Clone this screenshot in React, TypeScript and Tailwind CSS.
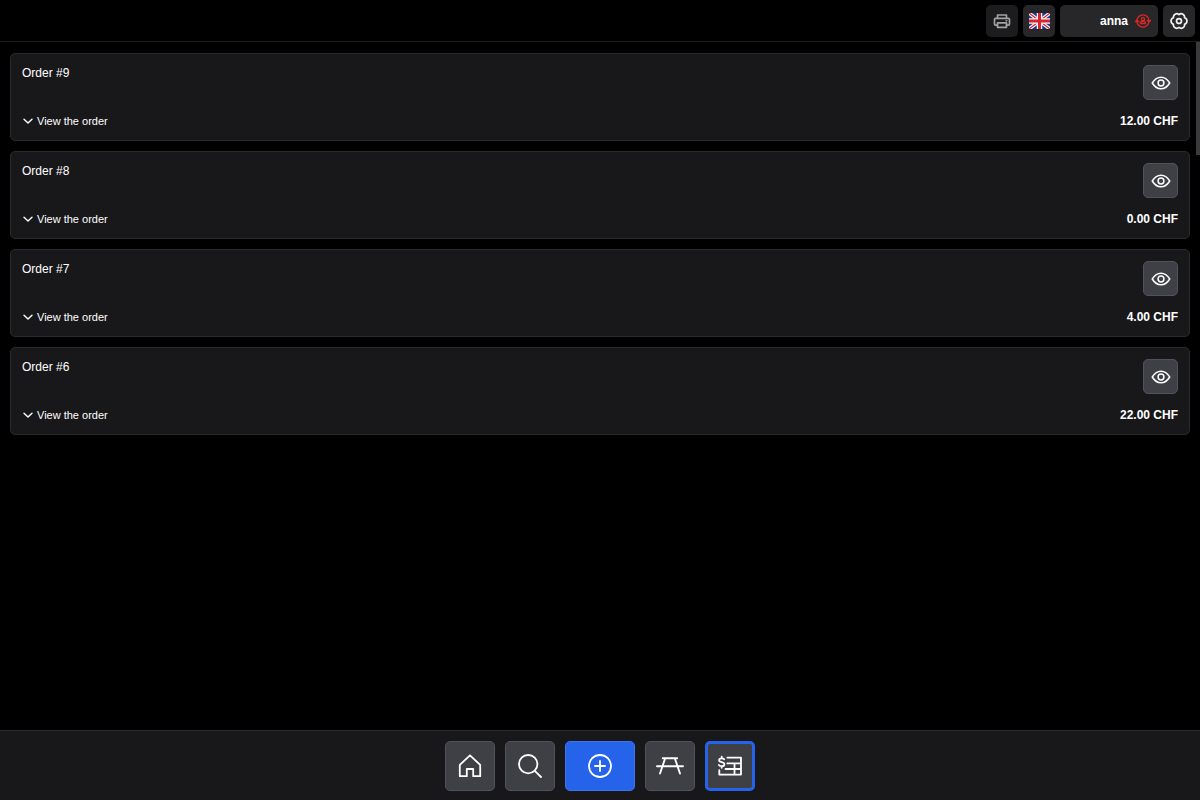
import type { ReactNode } from "react";

const orders = [
  { id: 9, total: "12.00" },
  { id: 8, total: "0.00" },
  { id: 7, total: "4.00" },
  { id: 6, total: "22.00" },
];

function Icon({ className, width = 1.8, children }: { className: string; width?: number; children: ReactNode }) {
  return (
    <svg
      className={className}
      viewBox="0 0 24 24"
      fill="none"
      stroke="currentColor"
      strokeWidth={width}
      strokeLinecap="round"
      strokeLinejoin="round"
      aria-hidden="true"
    >
      {children}
    </svg>
  );
}

function PrinterIcon() {
  return (
    <Icon className="size-[18px] text-[#a3a3a6]" width={2.2}>
      <path d="M6 8.500V4h12v4.500M6 17.500H3.500a1.500 1.500 0 0 1-1.500-1.500v-6A1.500 1.500 0 0 1 3.500 8.500h17A1.500 1.500 0 0 1 22 10v6a1.500 1.500 0 0 1-1.500 1.500H18" />
      <path d="M6 14.500h12v6H6zM17.500 11.700h.8" />
    </Icon>
  );
}

function FlagIcon() {
  return (
    <svg className="h-4 w-[21px]" viewBox="0 0 42 32" aria-hidden="true">
      <path fill="#1b3a93" d="M0 0h42v32H0z" />
      <path stroke="#f4f4f6" strokeWidth="7" d="m0 0 42 32M42 0 0 32" />
      <path stroke="#d8232f" strokeWidth="2.500" d="m0 0 42 32M42 0 0 32" />
      <path stroke="#f4f4f6" strokeWidth="11" d="M21 0v32M0 16h42" />
      <path stroke="#d8232f" strokeWidth="6" d="M21 0v32M0 16h42" />
    </svg>
  );
}

function SwitchUserIcon() {
  return (
    <Icon className="size-4 text-[#dc2626]" width={2}>
      <path d="M3 13.500V12A9.200 9.200 0 0 1 18.500 5.500M21 10.500V12A9.200 9.200 0 0 1 5.500 18.500" />
      <path d="M18.500 5.500A9.200 9.200 0 0 1 21 12M5.500 18.500A9.200 9.200 0 0 1 3 12" />
      <path d="m18.300 11 2.700 2.700 2.500-2.700M.7 13l2.300-2.700L5.700 13" />
      <circle cx="12" cy="9.300" r="2.300" />
      <path d="M8.300 16v-.8a2.500 2.500 0 0 1 2.500-2.500h2.400a2.500 2.500 0 0 1 2.500 2.500v.8z" />
    </Icon>
  );
}

function SettingsIcon() {
  return (
    <Icon className="size-[18px] text-[#f0f0f0]" width={2.3}>
      <path d="M12 3.500A4.500 4.500 0 0 1 19.400 7.700A4.500 4.500 0 0 1 19.400 16.300A4.500 4.500 0 0 1 12 20.500A4.500 4.500 0 0 1 4.600 16.300A4.500 4.500 0 0 1 4.600 7.700A4.500 4.500 0 0 1 12 3.500z" />
      <circle cx="12" cy="12" r="3.300" />
    </Icon>
  );
}

function EyeIcon() {
  return (
    <Icon className="size-5" width={1.8}>
      <path d="M1.500 12C4.200 7.700 7.800 5 12 5s7.800 2.700 10.500 7C19.800 16.300 16.200 19 12 19S4.200 16.300 1.500 12z" />
      <circle cx="12" cy="12" r="3.500" />
    </Icon>
  );
}

function ChevronIcon() {
  return (
    <Icon className="size-3" width={2.8}>
      <path d="m4 8.500 8 7.500 8-7.500" />
    </Icon>
  );
}

function HomeIcon() {
  return (
    <Icon className="size-6">
      <path d="M1.800 10.900 12 1.300l10.200 9.600v11.300h-7V15H8.800v7.200h-7z" />
    </Icon>
  );
}

function SearchIcon() {
  return (
    <Icon className="size-6">
      <circle cx="10.200" cy="10.200" r="9.200" />
      <path d="m16.800 16.800 6.200 6.200" />
    </Icon>
  );
}

function AddIcon() {
  return (
    <Icon className="size-6">
      <circle cx="12" cy="12" r="11" />
      <path d="M12 7v10M7 12h10" />
    </Icon>
  );
}

function TableIcon() {
  return (
    <svg
      className="h-6 w-7"
      viewBox="0 0 28 24"
      fill="none"
      stroke="currentColor"
      strokeWidth="1.900"
      strokeLinecap="round"
      aria-hidden="true"
    >
      <path d="M6.800 4.200h14.400M1 12.300h26M9.200 4.200 4 19.500M18.800 4.200 24 19.500" />
    </svg>
  );
}

function BillIcon() {
  return (
    <Icon className="size-6" width={1.8}>
      <path d="M6.200 5.300C5.700 4.600 4.800 4.300 3.700 4.300 2.200 4.300 1.100 5 1.100 6.200c0 2.600 5.300 1.200 5.300 4 0 1.300-1.200 2-2.700 2-1.200 0-2.200-.4-2.800-1.200M3.700 2.600v1.700M3.700 12.200v1.600" />
      <path d="M9.300 3.600h13.700v17H1.300v-4.400M9.300 9.400h13.700M7.500 15h15.500M16.500 9.400v11.200" />
    </Icon>
  );
}

const topButton = "flex h-8 items-center rounded-[5px]";
const navButton = "flex h-[50px] items-center justify-center rounded-[5px] border";

export default function App() {
  return (
    <div className="flex h-screen flex-col bg-black font-['Liberation_Sans',Arial,sans-serif] text-white">
      <header className="flex h-[42px] shrink-0 items-center justify-end gap-[5px] border-b border-[#1c1c1e] pr-[5px]">
        <button type="button" aria-label="Print" className={`${topButton} w-8 justify-center bg-[#1c1c1e]`}>
          <PrinterIcon />
        </button>
        <button type="button" aria-label="Language" className={`${topButton} w-8 justify-center bg-[#27272a]`}>
          <FlagIcon />
        </button>
        <button
          type="button"
          className={`${topButton} w-[98px] justify-end gap-[7px] bg-[#27272a] pr-[7px] text-[12px] font-bold`}
        >
          anna
          <SwitchUserIcon />
        </button>
        <button type="button" aria-label="Settings" className={`${topButton} w-8 justify-center bg-[#27272a]`}>
          <SettingsIcon />
        </button>
      </header>

      <main className="relative flex min-h-0 flex-1 flex-col gap-2.5 px-2.5 pt-[11px]">
        {orders.map((order) => (
          <section
            key={order.id}
            className="flex h-[88px] shrink-0 justify-between rounded-[5px] border border-[#2a2a2d] bg-[#18181b] p-[11px]"
          >
            <div className="flex flex-col items-start justify-between">
              <h2 className="text-[12px] leading-4">Order #{order.id}</h2>
              <button type="button" className="flex items-center gap-[3px] text-[11px] leading-4">
                <ChevronIcon />
                View the order
              </button>
            </div>
            <div className="flex flex-col items-end justify-between">
              <button
                type="button"
                aria-label={`Show order ${order.id}`}
                className="flex size-[35px] items-center justify-center rounded-[5px] border border-[#52525b] bg-[#3f3f46]"
              >
                <EyeIcon />
              </button>
              <p className="text-[12px] leading-4 font-bold">{order.total} CHF</p>
            </div>
          </section>
        ))}

        {/* Scroll thumb */}
        <div className="absolute top-0 right-0 h-[113px] w-1 bg-[#3a3a3c]" />
      </main>

      <nav className="flex h-[70px] shrink-0 items-start justify-center gap-2.5 border-t border-[#2c2c2f] bg-[#18181b] pt-2.5">
        <button type="button" aria-label="Home" className={`${navButton} w-[50px] border-[#52525b] bg-[#3f3f46]`}>
          <HomeIcon />
        </button>
        <button type="button" aria-label="Search" className={`${navButton} w-[50px] border-[#52525b] bg-[#3f3f46]`}>
          <SearchIcon />
        </button>
        <button type="button" aria-label="New order" className={`${navButton} w-[70px] border-[#3b76f0] bg-[#2563eb]`}>
          <AddIcon />
        </button>
        <button type="button" aria-label="Tables" className={`${navButton} w-[50px] border-[#52525b] bg-[#3f3f46]`}>
          <TableIcon />
        </button>
        <button
          type="button"
          aria-label="Orders"
          aria-current="page"
          className="flex size-[50px] items-center justify-center rounded-[5px] border-3 border-[#2563eb] bg-[#3f3f46]"
        >
          <BillIcon />
        </button>
      </nav>
    </div>
  );
}
